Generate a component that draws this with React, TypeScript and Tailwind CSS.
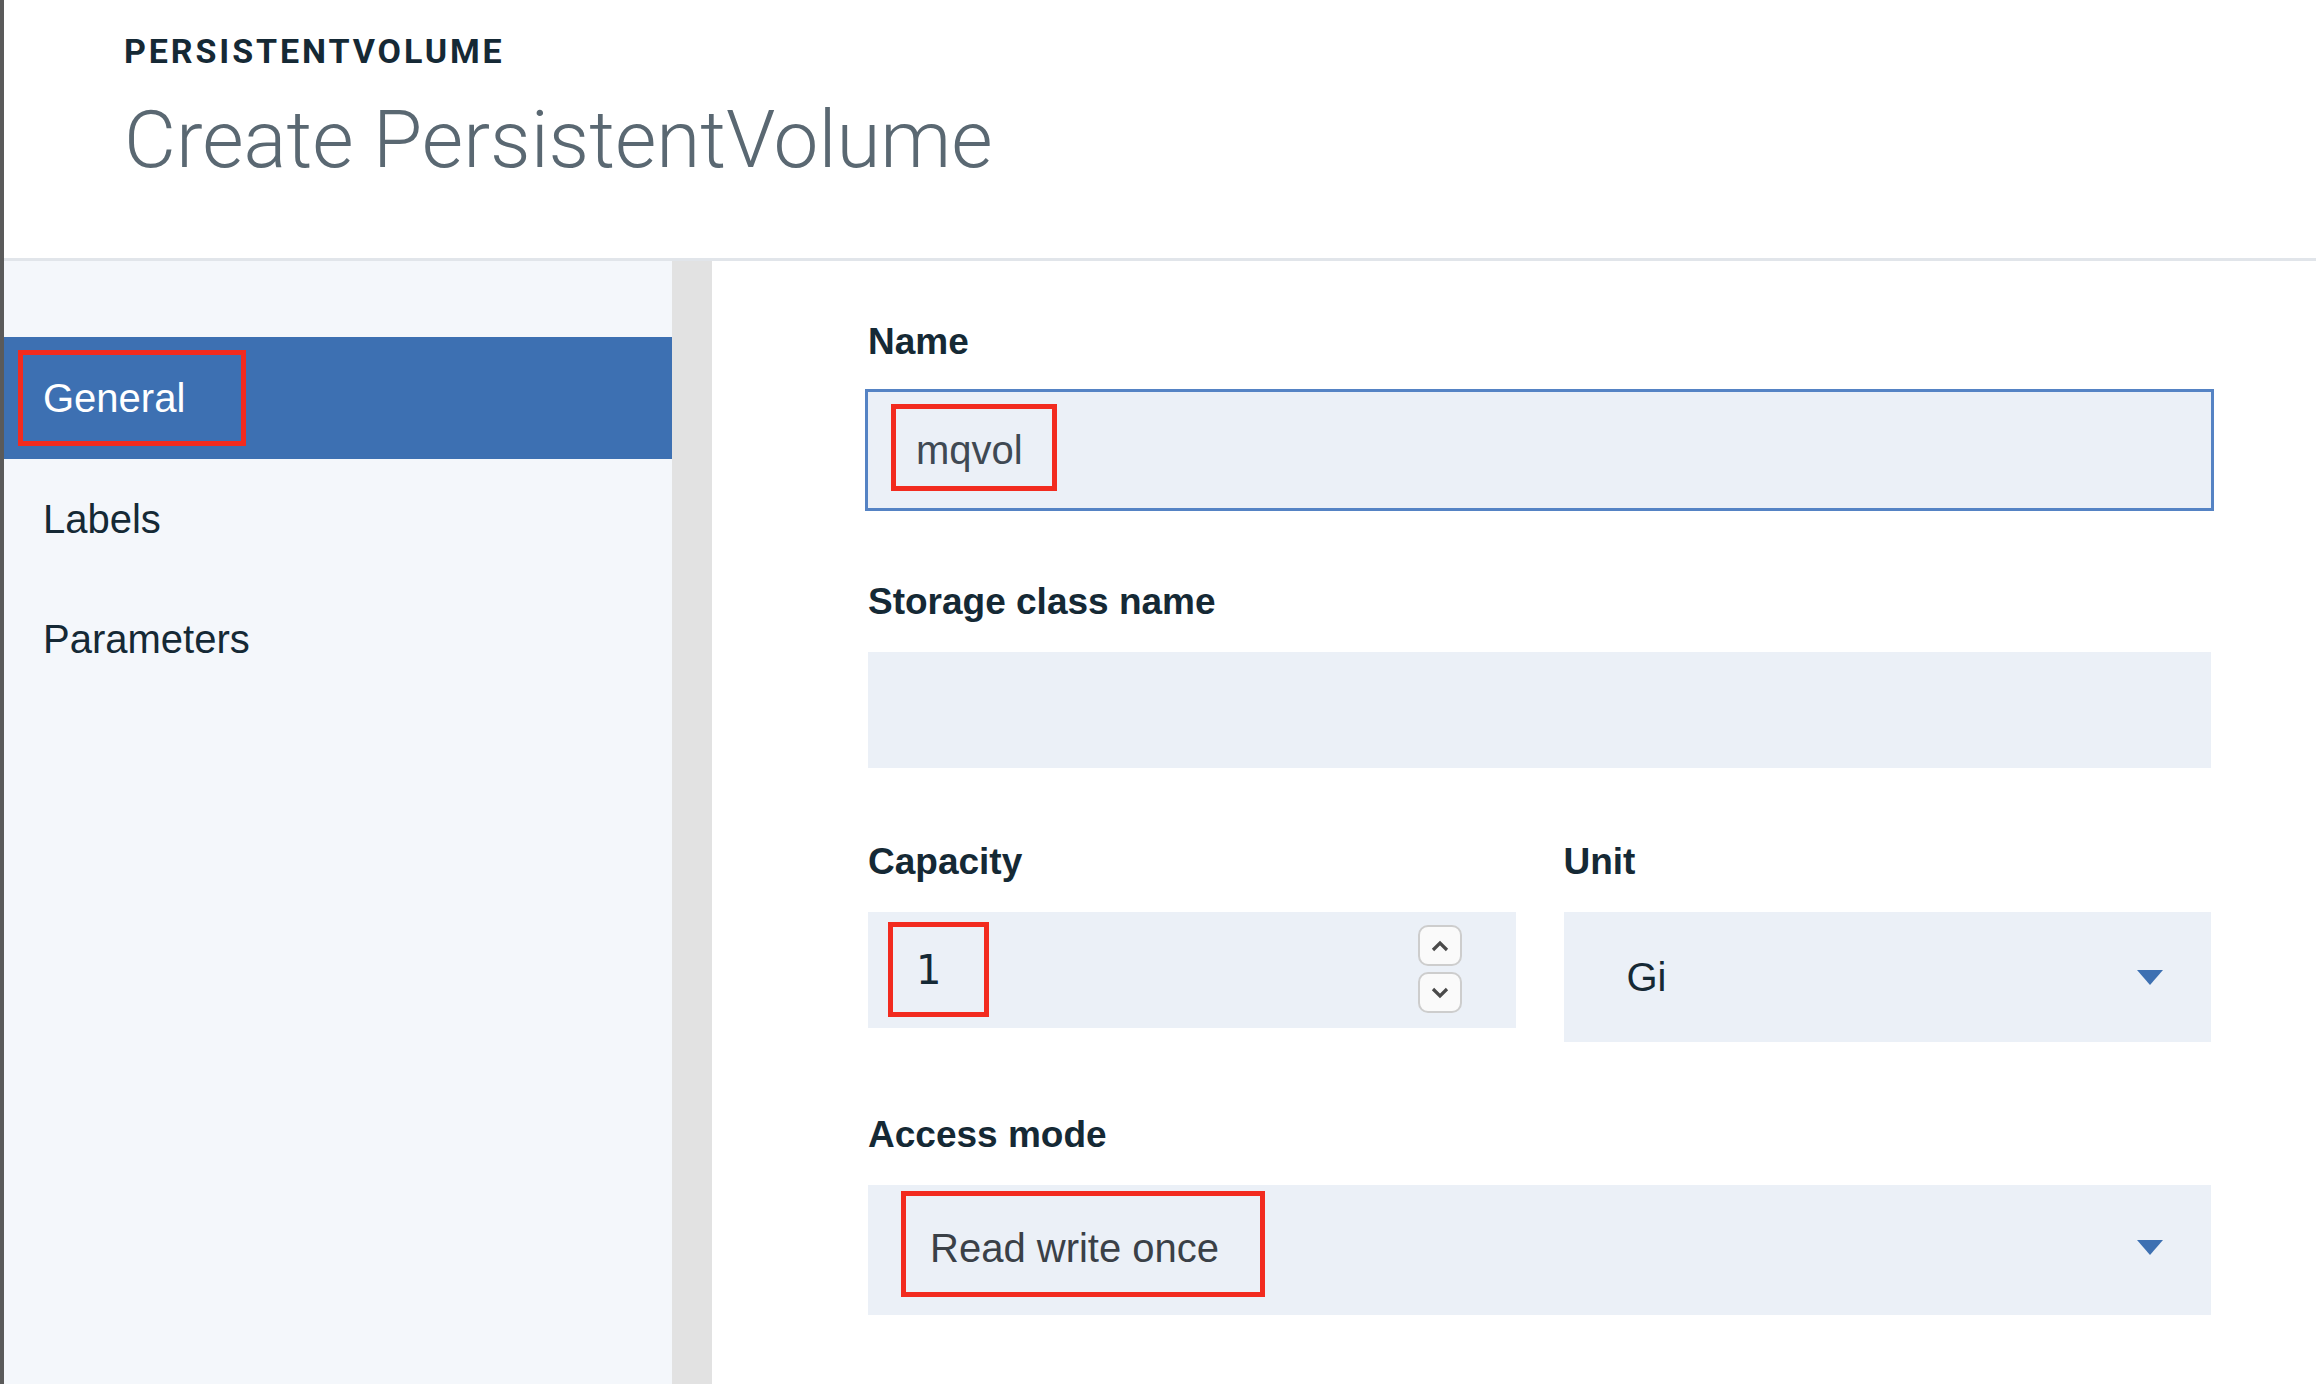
import { ReactNode } from 'react'

const NAV = ['General', 'Labels', 'Parameters']

function Label({ children }: { children: ReactNode }) {
  return (
    <div className="mb-[30px] text-[37px] font-bold leading-[40px] text-[#152935]">
      {children}
    </div>
  )
}

function Caret() {
  return (
    <svg width="26" height="15" viewBox="0 0 26 15">
      <polygon points="0,0 26,0 13,15" fill="#3d70b2" />
    </svg>
  )
}

function SpinButton({ up }: { up?: boolean }) {
  return (
    <div className="flex h-[41px] w-[44px] items-center justify-center rounded-[10px] border-2 border-[#cdcdcd] bg-[#fafafa]">
      <svg width="20" height="12" viewBox="0 0 20 12">
        <polyline
          points={up ? '3,10 10,3 17,10' : '3,2 10,9 17,2'}
          fill="none"
          stroke="#4a4a4a"
          strokeWidth="3.2"
        />
      </svg>
    </div>
  )
}

export default function App() {
  return (
    <div className="flex h-[1384px] w-[2316px] flex-col overflow-hidden border-l-4 border-[#5a5a5a] bg-white font-['Liberation_Sans',Arial,sans-serif] text-[#152935]">
      {/* page header */}
      <header className="h-[261px] shrink-0 border-b-[3px] border-[#e1e5ea] pl-[120px] pt-[31px]">
        <div className="font-['Roboto',sans-serif] text-[34px] font-bold leading-[40px] tracking-[2.9px] text-[#152935]">
          PERSISTENTVOLUME
        </div>
        <h1 className="mt-[21px] font-['Roboto',sans-serif] text-[80px] font-light leading-[96px] text-[#5a6872]">
          Create PersistentVolume
        </h1>
      </header>

      <div className="flex flex-1">
        <nav className="w-[668px] shrink-0 bg-[#f4f7fb] pt-[76px]">
          {NAV.map((item, i) =>
            i === 0 ? (
              <div
                key={item}
                className="flex h-[122px] items-center bg-[#3d70b2] pl-[14px] text-[40px] text-white"
              >
                <span className="flex h-[96px] w-[228px] items-center border-[5px] border-[#f22b1f] pl-[20px]">
                  {item}
                </span>
              </div>
            ) : (
              <div
                key={item}
                className="flex h-[120px] items-center pl-[39px] text-[40px] text-[#152935]"
              >
                {item}
              </div>
            )
          )}
        </nav>
        <div className="w-[40px] shrink-0 bg-[#e2e2e2]" />

        <main className="flex-1 pl-[156px] pt-[61px]">
          <div className="w-[1343px]">
            <Label>Name</Label>
            <div className="flex h-[116px] items-start bg-[#ebf0f7] pl-[23px] pt-[12px] ring-[3px] ring-[#5583c4]">
              <span className="flex h-[87px] items-center border-[5px] border-[#f22b1f] pl-[20px] pr-[29px] pt-[4px] text-[40px] text-[#3f4953]">
                mqvol
              </span>
            </div>

            <div className="mt-[74px]">
              <Label>Storage class name</Label>
              <div className="h-[116px] bg-[#ebf0f7]" />
            </div>

            <div className="mt-[74px] grid grid-cols-2 items-start gap-x-[48px]">
              <div>
                <Label>Capacity</Label>
                <div className="flex h-[116px] items-start justify-between bg-[#ebf0f7] pl-[20px] pr-[54px] pt-[10px]">
                  <span className="flex h-[95px] items-center border-[5px] border-[#f22b1f] pl-[23px] pr-[43px] font-['DejaVu_Sans',sans-serif] text-[40px] text-[#152935]">
                    1
                  </span>
                  <div className="mt-[3px] flex flex-col gap-[6px]">
                    <SpinButton up />
                    <SpinButton />
                  </div>
                </div>
              </div>
              <div>
                <Label>Unit</Label>
                <div className="flex h-[130px] items-center justify-between bg-[#ebf0f7] pl-[63px] pr-[48px] text-[40px] text-[#152935]">
                  <span>Gi</span>
                  <Caret />
                </div>
              </div>
            </div>

            <div className="mt-[73px]">
              <Label>Access mode</Label>
              <div className="flex h-[130px] items-start justify-between bg-[#ebf0f7] pl-[33px] pr-[48px]">
                <span className="mt-[6px] flex h-[106px] items-center border-[5px] border-[#f22b1f] pl-[24px] pr-[41px] pt-[8px] text-[40px] text-[#3a4047]">
                  Read write once
                </span>
                <div className="mt-[55px]">
                  <Caret />
                </div>
              </div>
            </div>
          </div>
        </main>
      </div>
    </div>
  )
}
